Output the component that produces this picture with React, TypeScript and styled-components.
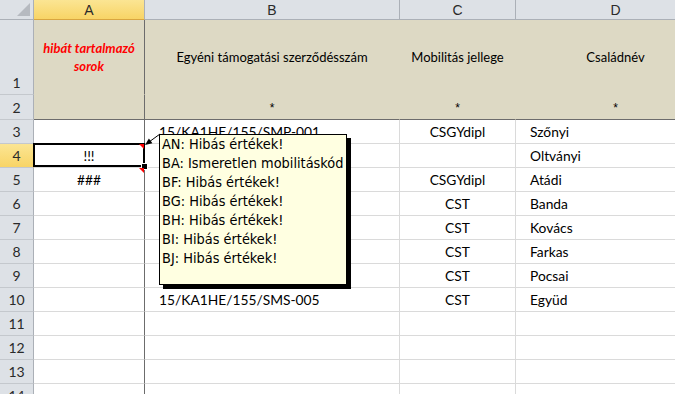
import React from 'react';
import styled, { createGlobalStyle, css } from 'styled-components';

const Global = createGlobalStyle`
  html, body { margin: 0; padding: 0; background: #fff; overflow: hidden; }
  #root { width: 675px; height: 394px; overflow: hidden; position: relative; }
`;

const FREEZE = '#6c6c6c';
const GRID = '#dadada';
const HEAD_BG = '#dde1e6';
const HEAD_LINE = '#abb0b7';
const TAN = '#ddd9c4';

const Sheet = styled.div`
  position: relative;
  display: grid;
  grid-template-columns: 34px 111px 255px 116px 200px;
  grid-template-rows: 20px 75px 25px repeat(12, 24px);
  width: 716px;
  font-family: Lato, 'Liberation Sans', sans-serif;
  font-size: 13.8px;
  color: #000;
`;

const Corner = styled.div`
  box-sizing: border-box;
  position: relative;
  background: ${HEAD_BG};
  border-right: 1px solid ${HEAD_LINE};
  border-bottom: 1px solid ${HEAD_LINE};
  &::after {
    content: '';
    position: absolute;
    right: 3px;
    bottom: 3px;
    width: 0;
    height: 0;
    border-left: 13px solid transparent;
    border-bottom: 13px solid #b6bac0;
  }
`;

const yellow = css`
  background: linear-gradient(#fbe593, #f8d466);
`;

const ColHeader = styled.div<{ $selected?: boolean }>`
  box-sizing: border-box;
  display: flex;
  align-items: center;
  justify-content: center;
  background: ${HEAD_BG};
  border-right: 1px solid ${HEAD_LINE};
  border-bottom: 1px solid ${HEAD_LINE};
  font-family: 'Liberation Sans', sans-serif;
  font-size: 14px;
  color: #2a2a2a;
  ${(p) => p.$selected && yellow}
  ${(p) => p.$selected && css`border-bottom-color: #d9a640;`}
`;

const RowHeader = styled.div<{ $selected?: boolean }>`
  box-sizing: border-box;
  display: flex;
  align-items: flex-end;
  justify-content: center;
  padding-bottom: 4px;
  background: ${HEAD_BG};
  border-right: 1px solid ${HEAD_LINE};
  border-bottom: 1px solid #c4c8cd;
  font-family: Lato, sans-serif;
  font-size: 14px;
  line-height: 15px;
  color: #2a2a2a;
  ${(p) => p.$selected && yellow}
  ${(p) => p.$selected && css`border-right-color: #d9a640;`}
`;

const HeadCell = styled.div<{ $freeze?: boolean; $last?: boolean }>`
  box-sizing: border-box;
  display: flex;
  align-items: center;
  justify-content: center;
  text-align: center;
  background: ${TAN};
  border-right: 1px solid ${(p) => (p.$freeze ? FREEZE : TAN)};
  border-bottom: 1px solid ${(p) => (p.$last ? FREEZE : TAN)};
  font-family: Lato, sans-serif;
  font-size: 13px;
  line-height: 18px;
  padding: 0 6px;
`;

const ErrorTitle = styled.span`
  color: #ff0000;
  font-weight: bold;
  font-style: italic;
  font-size: 13px;
`;

const Star = styled.span`
  font-family: 'Liberation Sans', sans-serif;
  font-size: 12px;
  padding-top: 2px;
`;

const Cell = styled.div<{ $align?: 'left' | 'center'; $freeze?: boolean; $selected?: boolean }>`
  box-sizing: border-box;
  position: relative;
  display: flex;
  align-items: flex-end;
  justify-content: ${(p) => (p.$align === 'center' ? 'center' : 'flex-start')};
  padding: 0 0 4px ${(p) => (p.$align === 'center' ? '0' : '14px')};
  line-height: 15px;
  white-space: nowrap;
  border-right: 1px solid ${(p) => (p.$freeze ? FREEZE : GRID)};
  border-bottom: 1px solid ${GRID};
  ${(p) =>
    p.$selected &&
    css`
      &::after {
        content: '';
        position: absolute;
        left: -1px;
        top: -1px;
        right: -1px;
        bottom: 0;
        border: 2px solid #000;
        z-index: 3;
      }
      &::before {
        content: '';
        position: absolute;
        right: -4px;
        bottom: -3px;
        width: 5px;
        height: 5px;
        background: #000;
        border: 1px solid #fff;
        z-index: 4;
      }
    `}
`;

const CommentMark = styled.span`
  position: absolute;
  top: 0;
  right: 0;
  width: 0;
  height: 0;
  border-top: 5px solid #ff0000;
  border-left: 5px solid transparent;
  z-index: 5;
`;

const Comment = styled.div`
  position: absolute;
  left: 159px;
  top: 134px;
  width: 188px;
  height: 151px;
  box-sizing: border-box;
  border: 1px solid #000;
  background: #ffffe1;
  box-shadow: 4px 4px 0 #000;
  padding: 0 2px;
  font-family: 'DejaVu Sans Condensed', 'DejaVu Sans', sans-serif;
  font-stretch: condensed;
  font-size: 14.4px;
  line-height: 19px;
  color: #000;
  white-space: nowrap;
  z-index: 10;
`;

const CommentLine = styled.div``;

const Arrow = styled.svg`
  position: absolute;
  left: 140px;
  top: 128px;
  z-index: 11;
  overflow: visible;
`;

type Row = { n: number; a?: string; b?: string; c?: string; d?: string; sel?: boolean; mark?: boolean };

const rows: Row[] = [
  { n: 3, b: '15/KA1HE/155/SMP-001', c: 'CSGYdipl', d: 'Szőnyi' },
  { n: 4, a: '!!!', d: 'Oltványi', sel: true, mark: true },
  { n: 5, a: '###', c: 'CSGYdipl', d: 'Atádi', mark: true },
  { n: 6, c: 'CST', d: 'Banda' },
  { n: 7, c: 'CST', d: 'Kovács' },
  { n: 8, c: 'CST', d: 'Farkas' },
  { n: 9, c: 'CST', d: 'Pocsai' },
  { n: 10, b: '15/KA1HE/155/SMS-005', c: 'CST', d: 'Együd' },
  { n: 11 },
  { n: 12 },
  { n: 13 },
  { n: 14 },
];

const comments = [
  'AN: Hibás értékek!',
  'BA: Ismeretlen mobilitáskód',
  'BF: Hibás értékek!',
  'BG: Hibás értékek!',
  'BH: Hibás értékek!',
  'BI: Hibás értékek!',
  'BJ: Hibás értékek!',
];

export default function App() {
  return (
    <>
      <Global />
      <Sheet>
        <Corner />
        <ColHeader $selected>A</ColHeader>
        <ColHeader>B</ColHeader>
        <ColHeader>C</ColHeader>
        <ColHeader>D</ColHeader>

        <RowHeader>1</RowHeader>
        <HeadCell $freeze>
          <ErrorTitle>hibát tartalmazó sorok</ErrorTitle>
        </HeadCell>
        <HeadCell>Egyéni támogatási szerződésszám</HeadCell>
        <HeadCell>Mobilitás jellege</HeadCell>
        <HeadCell>Családnév</HeadCell>

        <RowHeader>2</RowHeader>
        <HeadCell $freeze $last />
        <HeadCell $last><Star>*</Star></HeadCell>
        <HeadCell $last><Star>*</Star></HeadCell>
        <HeadCell $last><Star>*</Star></HeadCell>

        {rows.map((r) => (
          <React.Fragment key={r.n}>
            <RowHeader $selected={r.sel}>{r.n}</RowHeader>
            <Cell $align="center" $freeze $selected={r.sel}>
              {r.a}
              {r.mark && <CommentMark />}
            </Cell>
            <Cell>{r.b}</Cell>
            <Cell $align="center">{r.c}</Cell>
            <Cell>{r.d}</Cell>
          </React.Fragment>
        ))}
      </Sheet>
      <Arrow width="24" height="22" viewBox="0 0 24 22">
        <line x1="20" y1="6" x2="9" y2="14" stroke="#000" strokeWidth="1" />
        <polygon points="5,17 12.4,15.3 8.9,10.4" fill="#000" />
      </Arrow>
      <Comment>
        {comments.map((c) => (
          <CommentLine key={c}>{c}</CommentLine>
        ))}
      </Comment>
    </>
  );
}
